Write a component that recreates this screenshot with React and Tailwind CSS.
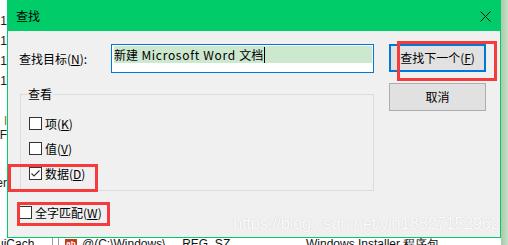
import React from "react";

function Box({ checked }) {
  return (
    <div className="w-[13px] h-[13px] border border-[#333333] bg-white shrink-0 flex items-center justify-center">
      {checked && (
        <svg width="11" height="11" viewBox="0 0 11 11">
          <path d="M1.5 5.5 L4 8 L9.5 2.5" fill="none" stroke="#333" strokeWidth="1.1" />
        </svg>
      )}
    </div>
  );
}

function Check({ checked, label, k, gap = "ml-[3px]" }) {
  return (
    <div className="flex items-center h-[13px]">
      <Box checked={checked} />
      <span className={`${gap} text-[12px] leading-[13px] text-black whitespace-nowrap`}>
        {label}(<span className="underline underline-offset-[1px]">{k}</span>)
      </span>
    </div>
  );
}

export default function App() {
  return (
    <div className="relative w-[508px] h-[245px] overflow-hidden bg-white flex [font-family:'Noto_Sans_CJK_SC',sans-serif]">
      <div className="w-[501px] flex flex-col">
        <div className="flex h-[238px]">
          {/* left background strip */}
          <div className="w-[7px] h-full overflow-hidden flex flex-col items-end bg-white text-[12px] [font-family:'Liberation_Sans',sans-serif] text-[#1a1a1a]">
            <div className="h-[13px] shrink-0" />
            <div className="h-[20px] leading-[16px] shrink-0">1</div>
            <div className="h-[20px] leading-[16px] shrink-0">1</div>
            <div className="h-[20px] leading-[16px] shrink-0">1</div>
            <div className="h-[20px] leading-[16px] shrink-0">1</div>
            <div className="h-[21px] shrink-0" />
            <div className="h-[14px] leading-[14px] shrink-0 text-[#8a5a2a]">l</div>
            <div className="h-[14px] leading-[14px] shrink-0 whitespace-nowrap">AF</div>
            <div className="h-[34px] shrink-0" />
            <div className="h-[14px] leading-[14px] shrink-0 whitespace-nowrap">er</div>
          </div>
          {/* dialog */}
          <div className="w-[494px] h-[238px] border border-[#00cc6a] flex flex-col">
            <div className="h-[30px] bg-[#00cc6a] flex items-center justify-between pl-[8px] pr-[9px] shrink-0">
              <span className="text-[12px] leading-[14px] text-black">查找</span>
              <svg width="11" height="11" viewBox="0 0 11 11">
                <path d="M0.5 0.5 L10.5 10.5 M10.5 0.5 L0.5 10.5" stroke="#111" strokeWidth="1" />
              </svg>
            </div>
            <div className="flex-1 bg-[#f0f0f0] flex">
              {/* left column */}
              <div className="pl-[11px] pt-[13px] flex flex-col">
                <div className="flex items-center h-[29px]">
                  <span className="w-[92px] text-[12px] leading-[14px] text-black whitespace-nowrap">
                    查找目标(<span className="underline underline-offset-[1px]">N</span>):
                  </span>
                  <div className="w-[263px] h-[29px] border border-[#0078d7] bg-white pt-[1px] pl-[2px] pr-[1px]">
                    <div className="h-[17px] bg-[#cce8cf] flex items-center text-[12px] leading-[14px] text-black whitespace-nowrap">
                      新建<span className="tracking-[0.7px]">&nbsp;Microsoft Word&nbsp;</span>文档
                      <span className="w-[1px] h-[16px] bg-black ml-[1px]" />
                    </div>
                  </div>
                </div>
                <div className="relative mt-[21px] ml-[1px] w-[354px] h-[97px] border border-[#dcdcdc] pl-[8px] pt-[22px] flex flex-col gap-[12px]">
                  <span className="absolute left-[6px] -top-[8px] px-[1px] bg-[#f0f0f0] text-[12px] leading-[14px] text-black">查看</span>
                  <Check label="项" k="K" />
                  <Check label="值" k="V" />
                  <Check checked label="数据" k="D" />
                </div>
                <div className="mt-[15px]">
                  <Check label="全字匹配" k="W" />
                </div>
              </div>
              {/* right column */}
              <div className="ml-[15px] pt-[13px] flex flex-col">
                <div className="w-[97px] h-[28px] border-2 border-[#0078d7] bg-[#e1e1e1] flex items-center justify-center text-[12px] leading-[14px] text-black whitespace-nowrap">
                  查找下一个(<span className="underline underline-offset-[1px]">F</span>)
                </div>
                <div className="mt-[11px] w-[97px] h-[28px] border border-[#adadad] bg-[#e1e1e1] flex items-center justify-center text-[12px] leading-[14px] text-black">
                  取消
                </div>
              </div>
            </div>
          </div>
        </div>
        {/* bottom background strip */}
        <div className="h-[7px] overflow-hidden flex items-start text-[12px] leading-[14px] [font-family:'Liberation_Sans',sans-serif] text-[#111] whitespace-nowrap">
          <div className="-mt-[1px] flex items-start">
            <span className="-ml-[3px] w-[41px]">uiCach</span>
            <span className="ml-[14px] w-[1px] h-[14px] bg-[#9a9a9a]" />
            <span className="ml-[5px] w-[1px] h-[14px] bg-[#9a9a9a]" />
            <span className="ml-[6px] mt-[2px] w-[12px] h-[10px] bg-[#c8381e] text-white text-[8px] leading-[10px] font-bold text-center">ab</span>
            <span className="ml-[5px] w-[224px]">@(C:\Windows\...&nbsp;&nbsp;REG_SZ</span>
            <span>Windows Installer 程序包</span>
          </div>
        </div>
      </div>
      {/* right shadow */}
      <div className="w-[7px] h-full bg-[linear-gradient(to_right,#a8cba8,#c8dec8)]" />

      {/* watermark */}
      <div className="absolute left-[233px] top-[214px] text-[17px] leading-[20px] tracking-[-0.45px] text-[#fbfbfb] [font-family:'Liberation_Sans',sans-serif] [text-shadow:0_0_1px_#c4c4c4] whitespace-nowrap">
        https://blog.csdn.net/yin18827152962
      </div>

      {/* red annotation boxes */}
      <div className="absolute left-[397px] top-[41px] w-[100px] h-[40px] border-[3px] border-[#f53b3b]" />
      <div className="absolute left-[8px] top-[164px] w-[90px] h-[28px] border-[3px] border-[#f53b3b]" />
      <div className="absolute left-[17px] top-[202px] w-[93px] h-[24px] border-[3px] border-[#f53b3b]" />
    </div>
  );
}
